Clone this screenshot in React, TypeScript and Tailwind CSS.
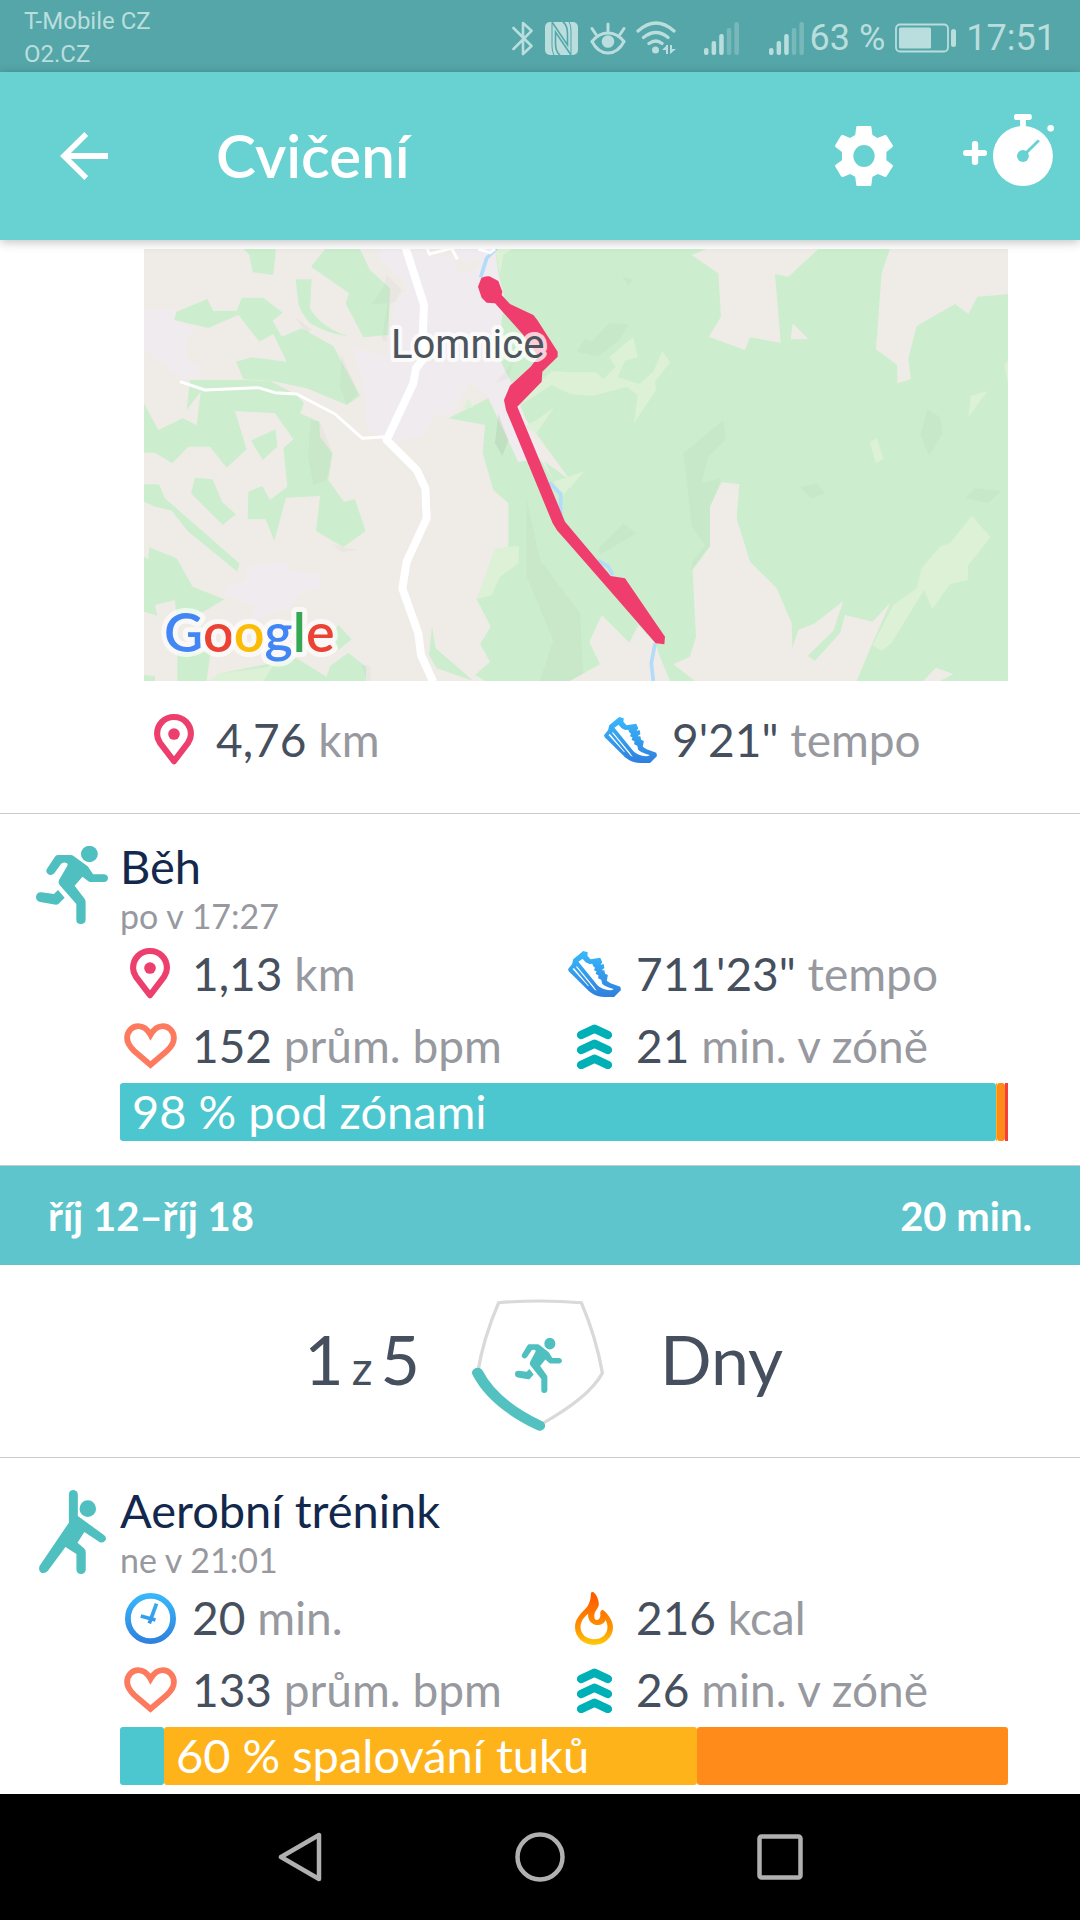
import React from "react";

function StatusIcons() {
  return (
    <>
      <svg className="mr-3 h-[35px] w-[21px]" viewBox="0 0 21 35" fill="none" stroke="#b9dedd" strokeWidth="2.6" strokeLinecap="round" strokeLinejoin="round" aria-label="Bluetooth">
        <path d="M1.5 7 19.5 25 11 33V2l8.500 7.800L1.500 28" />
      </svg>
      <svg className="mr-3 h-[33px] w-[33px]" viewBox="0 0 33 33" aria-label="NFC">
        <rect width="33" height="33" rx="5" fill="#b9dedd" />
        <path d="M7 0 22.500 23V12Q22.500 3 18 0M26 33 10.500 10V21Q10.500 30 15 33" fill="none" stroke="#54a6a8" strokeWidth="1.600" />
        <path d="M7 1V24q0 6 2 9M26 32V9q0-6-2-9" fill="none" stroke="#54a6a8" strokeWidth="1" />
      </svg>
      <svg className="mr-[10px] h-[33px] w-[36px]" viewBox="0 0 36 33" fill="none" stroke="#b9dedd" strokeWidth="3" strokeLinecap="round" aria-label="Eye comfort">
        <path d="M2 19.500Q9 11 18 11t16 8.500Q28 31 18 31T2 19.500ZM18 2v8M2 6.500l4 6M34 6.500l-4 6" />
        <circle cx="18" cy="19.500" r="6.300" fill="#b9dedd" stroke="none" />
      </svg>
      <svg className="mr-7 h-[34px] w-[40px]" viewBox="0 0 40 34" fill="none" stroke="#b9dedd" strokeWidth="3.300" strokeLinecap="round" aria-label="Wi-Fi">
        <path d="M2 10Q20-6 38 10M7.500 16.500q12.500-10 24.500 0M13 22.500q7-5 13 0" />
        <circle cx="19.500" cy="29" r="3.500" fill="#b9dedd" stroke="none" />
        <path d="m31 24-5 5h5v4ZM34 33v-5h6Z" fill="#b9dedd" stroke="none" />
        <path d="M31 24v9M35 24v8" strokeWidth="2" strokeLinecap="butt" />
      </svg>
    </>
  );
}

function Signal() {
  return (
    <svg className="h-[33px] w-[35px]" viewBox="0 0 35 33" fill="#b9dedd" aria-label="Signal">
      <rect x="0" y="26" width="4.500" height="7" rx="2" />
      <rect x="7.600" y="19" width="4.500" height="14" rx="2" />
      <rect x="15.200" y="12" width="4.500" height="21" rx="2" />
      <g opacity=".35">
        <rect x="22.800" y="6" width="4.500" height="27" rx="2" />
        <rect x="30.400" y="0" width="4.500" height="33" rx="2" />
      </g>
    </svg>
  );
}

function Battery() {
  return (
    <svg className="h-[30px] w-[61px]" viewBox="0 0 61 30" aria-label="Battery">
      <rect x="1" y="1.500" width="52" height="27" rx="4" fill="none" stroke="#b9dedd" strokeWidth="1.800" />
      <rect x="4" y="4.500" width="32" height="21" rx="1.500" fill="#b9dedd" />
      <rect x="56" y="6" width="5" height="18" rx="2.500" fill="#b9dedd" />
    </svg>
  );
}

function MapView() {
  return (
    <svg className="block h-auto w-full" viewBox="0 0 864 432" role="img" aria-label="Map of the route near Lomnice">
      <rect width="864" height="432" fill="#efece7" />
      <g transform="translate(-4 -9) scale(.33333)">
        <g fill="#f0ebef">
          <path d="M12 210H105L110 245L160 265L135 310L145 370L185 380L180 412H120L12 330Z" />
          <path d="M715 27H1080L1085 250L1130 430L1060 480L990 425L930 530L885 520L855 585L740 608L680 560L672 430L635 320L740 350L745 280L770 180L800 150L790 120L720 60Z" />
          <path d="M320 980 430 962 460 1000 535 1000 545 1045 480 1060 445 1105 370 1130 330 1150 345 1095 255 1065 260 1040 315 1020Z" />
        </g>
        <path d="M860 27H930L945 55 990 70 1020 60 1010 90 955 98 940 50 870 45Z" fill="#efece7" />
        <g fill="#cdeece">
          <path d="M1065 27H2620V1323H1035L1005 1305 1050 1265 1020 1212 1052 1160 1010 1078 1060 960 1105 918 1105 790 1060 750 1028 640 1035 555 925 535 1045 475 1135 665 1200 655 1290 720 1130 500 1205 420 1180 380 1115 430 1080 360 1085 240 1095 180 1075 100Z" />
          <path d="M310 27H408L400 105 338 97 328 45Z" />
          <path d="M555 27H660L690 90 750 145 745 285 670 292 617 190 627 160 513 80Z" />
          <path d="M467 118H515L510 205Q540 260 625 290Q560 280 510 250Q480 215 475 190Z" />
          <path d="M110 215 202 177 220 213 290 212 305 173H370L428 218 398 242 425 290 485 265 580 318 660 468 620 495 500 445 390 422 310 418 288 365 335 352 440 365 400 282 358 305 295 225 205 264 102 240Z" />
          <path d="M150 420H310L390 422 470 465 492 490 480 520 538 545 540 590 577 640 565 720 612 785 645 778 677 873 610 922 528 873 540 768 438 773 403 903 377 838H323L325 755 367 738 390 780 442 740 430 625 460 598 405 520 285 513 320 628 260 683 210 620H145L97 670 45 638H12V490L55 570 128 535 170 555 182 455 140 510Z" />
          <path d="M333 602 407 568 412 620 368 660Z" />
          <path d="M165 713 218 718 247 787 288 823 248 855 153 760Z" />
          <path d="M12 733H57L75 775 298 970 292 995 145 875 95 812 45 800 12 785Z" />
          <path d="M28 922 110 955 158 1040 253 1078 200 1110 110 1150 105 1080 45 1095 52 1127 12 1115V950L25 958Z" />
          <path d="M12 1305 45 1308V1323H12ZM112 1240 212 1235 200 1323H112ZM570 1278 625 1238 678 1280V1323H210L240 1300 470 1255 560 1310ZM595 1155 635 1198 595 1230 580 1180Z" />
          <path d="M876 1158 887 1225 1000 1323 890 1285 867 1245Z" />
        </g>
        <path d="M1045 470 1115 435 1200 640 1240 720 1200 655 1135 665Z" fill="#f0ebef" />
        <g fill="#dcf1d6">
          <path d="M1065 27H1115L1090 45 1080 105Z" />
          <path d="M210 1323 240 1300 380 1282 405 1270 370 1323Z" />
          <path d="M1205 420 1235 393 1290 397V462L1235 435 1165 480 1135 500ZM1190 540 1242 502 1190 580 1150 560ZM1240 725 1330 695 1265 770Z" />
          <path d="M1065 925 1137 918 1135 970 1080 1010 1055 1065 1010 1078Z" />
          <path d="M985 475 1000 503 970 505Z" />
        </g>
        <g fill="#000" opacity=".018">
          <path d="M740 105 785 150 765 185 750 190 740 305 725 300 742 190 695 192 730 145Z" />
          <path d="M540 545 577 640 560 720 520 735 505 650 512 540Z" />
          <path d="M605 345 655 460 620 495 600 440Z" />
          <path d="M465 230 515 270 500 280ZM1120 365 1105 415 1065 430ZM570 910 610 922 655 930 605 937ZM665 1275 692 1275V1323H680Z" />
          <path d="M1160 780 1200 960 1320 1120 1330 1323H1200L1240 1200 1160 1010Z" />
        </g>
        <path d="M1075 520 1105 600 1087 648 1065 610Z" fill="#000" opacity=".06" />
        <g transform="translate(1290 0)">
          <g fill="#000" opacity=".018">
            <path d="M1072 508 1110 530 1118 580 1078 648 1050 585ZM690 742 740 730 765 760 725 777ZM1185 775 1215 745 1295 752 1255 790ZM460 540 468 600 415 650 395 728 455 715 420 800V915L365 990V970L405 915 365 860 340 640ZM115 250 178 252 148 300 85 350 20 335 45 295 65 305ZM160 850 200 880 90 945 85 925ZM155 107 188 120 175 138Z" />
          </g>
          <g fill="#efece7">
            <path d="M365 45 410 27H745L655 110 615 102 632 308 540 292 525 330 417 290 453 230 445 100Z" />
            <path d="M668 250 715 297 662 298Z" />
            <path d="M960 27H1320V162L1222 170 1195 222 1155 192 1040 258 1015 355 1022 418 982 430V375L918 328 935 100Z" />
            <path d="M455 727 508 733 500 835 540 965 620 1045 665 1150 667 1225 685 1170 735 1150 820 1083 790 1172 712 1248 735 1262 810 1180 825 1125 908 1145 960 1090 905 1215 860 1323H375L310 1273 360 1250 378 1190 368 990 420 920V800Z" />
            <path d="M1060 1323 1098 1283 1150 1302 1110 1323ZM0 1323 90 1273 58 1205 95 1125 178 1208 205 1155 255 1210 270 1250 300 1323Z" />
          </g>
          <g fill="#dcf1d6">
            <path d="M0 397H78L100 417 137 380 118 352 190 290 203 352 165 362 142 412 208 432 250 395 277 333 300 367 255 425 258 450 192 550 203 465 170 440 68 468 0 462Z" />
            <path d="M1205 827 1262 892 1195 975 1193 1020 1140 1033 1087 1107 1062 1050 965 1208 935 1232 908 1215 970 1095 1040 1045 1055 985 1110 920 1140 910Z" />
            <path d="M1203 468 1252 453 1195 532ZM920 593 940 655 918 670 900 608ZM1303 375 1314 360V430ZM0 710 40 695 0 745Z" />
          </g>
        </g>
        <g fill="none" stroke="#b3dbfa" strokeWidth="11">
          <path d="M1070 24 1040 55 1022 112M1228 728 1262 762V825M1375 962 1405 980 1418 1005M1545 1210 1534 1270 1540 1323" />
        </g>
        <g fill="none" stroke="#fff" strokeLinejoin="round">
          <path d="M797 24 852 195 848 290 858 345 828 385 820 430 740 600 830 690 856 745 860 835 800 965 787 1045 835 1180 843 1245 880 1326" strokeWidth="24" />
          <path d="M120 425 195 450 355 443 405 458 470 462 585 522 667 595 740 590" strokeWidth="9" />
          <path d="M862 27 868 42 935 25 952 58M1015 27 1050 38 1065 27" strokeWidth="9" />
        </g>
        <g fill="#ef3e6d">
          <path d="M1024 114Q1035 107 1048 109L1075 123 1087 155 1085 165 1110 192 1180 225 1192 240 1253 335V350L1207 395 1205 425 1132 500 1275 845 1412 1008 1455 1015 1575 1190 1573 1213 1547 1210 1408 1050 1290 915 1252 872 1238 850 1098 510 1092 480 1110 437 1172 380 1195 350 1150 285 1065 190 1040 188 1025 173 1014 140Z" />
        </g>
      </g>
      <text x="247" y="109" fontSize="40" fill="#4c545c" stroke="#fff" strokeOpacity=".75" strokeWidth="8" strokeLinejoin="round" paintOrder="stroke" className="font-['Roboto',sans-serif]">Lomnice</text>
      <text x="20" y="403" fontSize="54" fontWeight="600" stroke="#fff" strokeOpacity=".65" strokeWidth="10" strokeLinejoin="round" paintOrder="stroke" className="font-['Lato',sans-serif]">
        <tspan fill="#4285f4">G</tspan><tspan fill="#ea4335">o</tspan><tspan fill="#fbbc05">o</tspan><tspan fill="#4285f4">g</tspan><tspan fill="#34a853">l</tspan><tspan fill="#ea4335">e</tspan>
      </text>
    </svg>
  );
}

function PinIcon() {
  return (
    <svg className="h-[52px] w-[40px]" viewBox="377 29 117 153" preserveAspectRatio="none" aria-hidden="true">
      <path d="M435.500 38C407 38 386 60 386 88Q386 101 394 113L435.500 168 477 113Q485 101 485 88C485 60 464 38 435.500 38Z" fill="none" stroke="#ed3f6d" strokeWidth="18" strokeLinejoin="round" />
      <ellipse cx="435.500" cy="88" rx="17" ry="17" fill="#ed3f6d" />
    </svg>
  );
}

function ShoeIcon() {
  return (
    <svg className="h-[46px] w-[53px]" viewBox="185 83 153 138" preserveAspectRatio="none" aria-hidden="true">
      <defs>
        <linearGradient id="shoe" x1="0" y1="0" x2="0" y2="1">
          <stop offset="0" stopColor="#38b9fb" />
          <stop offset="1" stopColor="#2f7fde" />
        </linearGradient>
      </defs>
      <path fill="url(#shoe)" d="M229 83 242 87 241 97 250 108 278 103 284 117 279 124 288 122 290 134 282 141 290 141 292 151 300 155 297 172 308 180 336 190 338 200 318 221H290C266 220 250 210 240 198L187 144 185 138 197 122 200 108Z" />
      <g fill="#fff">
        <path d="M215 115 227 106 236 117 247 122 255 121 258 129 263 133 260 141 267 144 265 152 273 156 272 165 281 169 284 182Q295 191 317 197 314 201 306 201 284 200 270 186Z" />
        <path d="M198 137 202 134 246 189 242 187ZM208 130 211 129 258 188 268 202 262 199Z" />
      </g>
    </svg>
  );
}

function HeartIcon() {
  return (
    <svg className="h-[46px] w-[53px]" viewBox="359 252 153 137" preserveAspectRatio="none" aria-hidden="true">
      <path d="M435.500 287C426 269 415 261 400 261C382 261 368 277 368 297 368 311 376 323 388 335L435.500 377 483 335C496 323 503 311 503 297 503 277 489 261 471 261Q450 261 435.500 287Z" fill="none" stroke="#fd7a5e" strokeWidth="17" />
    </svg>
  );
}

function ZoneIcon() {
  return (
    <svg className="h-[45px] w-[35px]" viewBox="106 252 102 135" preserveAspectRatio="none" aria-hidden="true">
      <path d="M118 285 157 266 196 285M118 330 157 311 196 330M118 375 157 356 196 375" fill="none" stroke="#00b0b7" strokeWidth="25" strokeLinecap="round" strokeLinejoin="round" />
    </svg>
  );
}

function ClockIcon() {
  return (
    <svg className="h-[51px] w-[51px]" viewBox="361 400 149 153" preserveAspectRatio="none" aria-hidden="true">
      <defs>
        <linearGradient id="clock" gradientUnits="userSpaceOnUse" x1="0" y1="400" x2="0" y2="553">
          <stop offset="0" stopColor="#38b9fb" />
          <stop offset="1" stopColor="#2f7fde" />
        </linearGradient>
      </defs>
      <ellipse cx="435.500" cy="476.500" rx="66" ry="68" fill="none" stroke="url(#clock)" strokeWidth="17" />
      <path d="M432 491 453 432M407 469 450 481" fill="none" stroke="url(#clock)" strokeWidth="11" />
    </svg>
  );
}

function FlameIcon() {
  return (
    <svg className="h-[53px] w-[38px]" viewBox="102 397 110 159" preserveAspectRatio="none" aria-hidden="true">
      <defs>
        <linearGradient id="flame" x1="0" y1="0" x2="0" y2="1">
          <stop offset=".1" stopColor="#ff5c00" />
          <stop offset=".7" stopColor="#ff9500" />
          <stop offset="1" stopColor="#ffcc08" />
        </linearGradient>
      </defs>
      <path fill="url(#flame)" fillRule="evenodd" d="M153 397C160 398 170 415 171 432 171 445 160 452 158 465 157 475 160 482 166 481 172 480 177 472 175 462 175 455 178 450 183 451 200 465 212 485 212 503 212 535 186 556 157 556 127 556 102 534 102 503 102 480 115 466 128 452 140 440 148 425 148 402 148 399 150 397 153 397ZM140 462C128 472 118 485 118 503 118 524 136 539 157 539 180 539 196 524 196 502 196 493 193 487 191 481 185 495 170 498 160 495 145 490 139 478 140 462Z" />
    </svg>
  );
}

function RunnerIcon({ className }: { className: string }) {
  return (
    <svg className={className} viewBox="105 471 209 234" preserveAspectRatio="none" fill="#4fbfbf" aria-hidden="true">
      <ellipse cx="260" cy="495" rx="24.500" ry="24.500" />
      <path d="M168 498H206Q210 498 214 501L255 532 271 556H303Q314 558 314 568 313 579 302 579H263Q259 579 256 576L240 563 217 590 246 629Q249 633 249 640V692Q248 705 235 705 222 705 222 692V645L173 587Q169 580 172 573L196 530Q199 521 190 521 180 520 177 526L158 553Q152 560 143 557 132 552 136 541L160 503Q163 498 168 498Z" />
      <path d="M169 603 188 626 170 645Q168 647 163 647L117 639Q105 636 105 624 106 609 121 610L157 615Z" />
    </svg>
  );
}

function AerobicIcon({ className }: { className: string }) {
  return (
    <svg className={className} viewBox="113 84 195 252" preserveAspectRatio="none" fill="#4fbfbf" aria-hidden="true">
      <ellipse cx="255" cy="140" rx="24" ry="25" />
      <path d="M200 97Q201 84 213 84 225 85 226 97V162L302 219Q310 225 307 234 301 244 290 241L245 210 225 242 244 259Q249 264 249 270V323Q248 335 235 336 223 335 222 323V276L190 255 139 326Q131 336 119 332 110 325 115 311L200 182Z" />
    </svg>
  );
}

function Stat({ icon, value, unit }: { icon: React.ReactNode; value: string; unit: string }) {
  return (
    <div className="flex h-[72px] min-w-0 items-center whitespace-nowrap">
      <span className="mr-3 flex w-[60px] shrink-0 items-center justify-center">{icon}</span>
      <span className="text-[46px] leading-[72px] text-[#97999f]">
        <span className="text-[#464f5e]">{value}</span> {unit}
      </span>
    </div>
  );
}

function Exercise({ icon, title, time, children, bar }: { icon: React.ReactNode; title: string; time: string; children: React.ReactNode; bar: React.ReactNode }) {
  return (
    <article className="flex pr-[72px] pt-6">
      <div className="flex w-[120px] shrink-0 justify-center pl-6 pt-2">{icon}</div>
      <div className="min-w-0 flex-1">
        <h2 className="text-[47px] leading-[56px] text-[#12284c]">{title}</h2>
        <p className="text-[34px] leading-[44px] text-[#97999f]">{time}</p>
        <div className="mb-px grid grid-cols-2">{children}</div>
        {bar}
      </div>
    </article>
  );
}

export default function App() {
  return (
    <div className="flex min-h-screen flex-col bg-white font-['Lato',sans-serif]">
      <div className="flex h-[72px] shrink-0 items-center bg-[#54a6a8] pl-6 pr-6 pt-1 font-['Roboto',sans-serif] text-[#b9dedd]">
        <div className="flex-1 text-[24px] leading-[33px]">
          <p>T-Mobile CZ</p>
          <p>O2.CZ</p>
        </div>
        <StatusIcons />
        <Signal />
        <span className="w-[30px]" />
        <Signal />
        <span className="ml-[6px] text-[36px]">63 %</span>
        <span className="ml-[10px] mr-[10px]"><Battery /></span>
        <span className="text-[36px]">17:51</span>
      </div>

      <header className="z-10 flex h-[168px] shrink-0 items-center bg-[#68d1d1] pl-[60px] pr-[26px] text-white shadow-[0_2px_10px_rgba(0,0,0,0.25)]">
        <button type="button" aria-label="Back" className="mr-[108px]">
          <svg className="h-12 w-12" viewBox="174 396 140 144" preserveAspectRatio="none" fill="currentColor">
            <path d="M174 468 245 396 256 408 206 459H314V477H206L256 528 245 540Z" />
          </svg>
        </button>
        <h1 className="flex-1 pb-[2px] text-[60px] font-semibold leading-[72px]">Cvičení</h1>
        <button type="button" aria-label="Settings" className="mr-[70px]">
          <svg className="h-[60px] w-[58px]" viewBox="905 378 158 180" preserveAspectRatio="none" fill="currentColor">
            <path fillRule="evenodd" d="M966 378H1001Q1004 378 1004 381L1007 405 1021 414 1041 405Q1044 404 1046 407L1062 435Q1064 439 1061 442L1045 456V481L1061 494Q1064 497 1062 500L1046 528Q1044 532 1041 531L1022 522 1007 530 1004 555Q1004 558 1001 558H966Q963 558 963 555L960 530 946 522 927 531Q923 532 921 528L906 500Q904 497 907 494L924 481V456L907 442Q904 439 906 435L921 407Q923 404 927 405L946 414 960 405 963 381Q963 378 966 378ZM984 435A29 33 0 0 0 984 501A29 33 0 0 0 984 435Z" />
          </svg>
        </button>
        <button type="button" aria-label="Add exercise" className="pb-[12px]">
          <svg className="h-[72px] w-[91px]" viewBox="1252 342 246 216" preserveAspectRatio="none" fill="currentColor">
            <rect x="1276" y="423" width="17" height="72" rx="8" />
            <rect x="1252" y="450" width="65" height="18" rx="8" />
            <ellipse cx="1414" cy="468" rx="81" ry="90" />
            <rect x="1406" y="352" width="16" height="34" />
            <rect x="1390" y="342" width="48" height="18" rx="7" />
            <ellipse cx="1489" cy="385" rx="9" ry="10" />
            <ellipse cx="1414" cy="468" rx="16" ry="18" fill="#68d1d1" />
            <path d="M1414 468 1457 421" stroke="#68d1d1" strokeWidth="8" />
          </svg>
        </button>
      </header>

      <main className="flex-1">
        <section className="border-b border-[#c9cccc] pt-[9px]">
          <div className="ml-36 mr-[72px]">
            <MapView />
          </div>
          <div className="ml-36 mr-6 grid grid-cols-2 pb-[37px] pt-[23px]">
            <Stat icon={<PinIcon />} value="4,76" unit="km" />
            <Stat icon={<ShoeIcon />} value={"9'21\""} unit="tempo" />
          </div>
        </section>

        <section className="border-b border-[#c9cccc] pb-6">
          <Exercise
            icon={<RunnerIcon className="h-[78px] w-[72px]" />}
            title="Běh"
            time="po v 17:27"
            bar={
              <div className="grid h-[58px] grid-cols-[876fr_1fr_8fr_3fr] whitespace-nowrap text-[47px] leading-[56px] text-white">
                <div className="min-w-0 rounded-[3px] bg-[#4cc7cf] pl-3">98 % pod zónami</div>
                <div className="bg-[#ffb31a]" />
                <div className="rounded-[3px] bg-[#ff8c1a]" />
                <div className="bg-[#f3403c]" />
              </div>
            }
          >
            <Stat icon={<PinIcon />} value="1,13" unit="km" />
            <Stat icon={<ShoeIcon />} value={"711'23\""} unit="tempo" />
            <Stat icon={<HeartIcon />} value="152" unit="prům. bpm" />
            <Stat icon={<ZoneIcon />} value="21" unit="min. v zóně" />
          </Exercise>
        </section>

        <div className="flex h-[99px] items-center justify-between bg-[#5ec5cc] px-12 text-[40px] font-bold text-white">
          <span>říj 12–říj 18</span>
          <span>20 min.</span>
        </div>

        <section className="grid h-[193px] grid-cols-[1fr_240px_1fr] items-center border-b border-[#c9cccc] text-[68px] text-[#464f5e]">
          <p className="pb-1 text-right">
            1<span className="px-2 text-[46px]">z</span>5
          </p>
          <div className="grid place-items-center pr-1 pt-2">
            <svg className="col-start-1 row-start-1 h-[132px] w-[133px]" viewBox="572 90 360 396" preserveAspectRatio="none" fill="none" aria-hidden="true">
              <path d="M588 308Q602 210 644 101 756 91 868 101 908 205 925 312 890 385 757 467" stroke="#d9d9d9" strokeWidth="9" />
              <path d="M587 311Q630 404 755 470" stroke="#54c1c1" strokeWidth="30" strokeLinecap="round" />
            </svg>
            <RunnerIcon className="col-start-1 row-start-1 h-[55px] w-[47px]" />
          </div>
          <p className="pb-1">Dny</p>
        </section>

        <section className="pb-[9px]">
          <Exercise
            icon={<AerobicIcon className="h-[84px] w-[67px]" />}
            title="Aerobní trénink"
            time="ne v 21:01"
            bar={
              <div className="grid h-[58px] grid-cols-[44fr_533fr_311fr] whitespace-nowrap text-[47px] leading-[56px] text-white">
                <div className="rounded-[3px] bg-[#4cc7cf]" />
                <div className="min-w-0 rounded-[3px] bg-[#ffb31a] pl-3">60 % spalování tuků</div>
                <div className="rounded-[3px] bg-[#ff8c1a]" />
              </div>
            }
          >
            <Stat icon={<ClockIcon />} value="20" unit="min." />
            <Stat icon={<FlameIcon />} value="216" unit="kcal" />
            <Stat icon={<HeartIcon />} value="133" unit="prům. bpm" />
            <Stat icon={<ZoneIcon />} value="26" unit="min. v zóně" />
          </Exercise>
        </section>
      </main>

      <nav className="flex h-[126px] shrink-0 justify-center bg-black">
        <button type="button" aria-label="Back" className="flex w-[240px] items-center justify-center">
          <svg className="h-[50px] w-[44px]" viewBox="0 0 44 50" fill="none" stroke="#b0b0b0" strokeWidth="4.500" strokeLinejoin="round">
            <path d="M3 25 41 3V47Z" />
          </svg>
        </button>
        <button type="button" aria-label="Home" className="flex w-[240px] items-center justify-center">
          <svg className="h-[50px] w-[50px]" viewBox="0 0 50 50" fill="none" stroke="#b0b0b0" strokeWidth="4.500">
            <circle cx="25" cy="25" r="22.500" />
          </svg>
        </button>
        <button type="button" aria-label="Recent apps" className="flex w-[240px] items-center justify-center">
          <svg className="h-[46px] w-[46px]" viewBox="0 0 46 46" fill="none" stroke="#b0b0b0" strokeWidth="4.500">
            <rect x="2.500" y="2.500" width="41" height="41" rx="2" />
          </svg>
        </button>
      </nav>
    </div>
  );
}
